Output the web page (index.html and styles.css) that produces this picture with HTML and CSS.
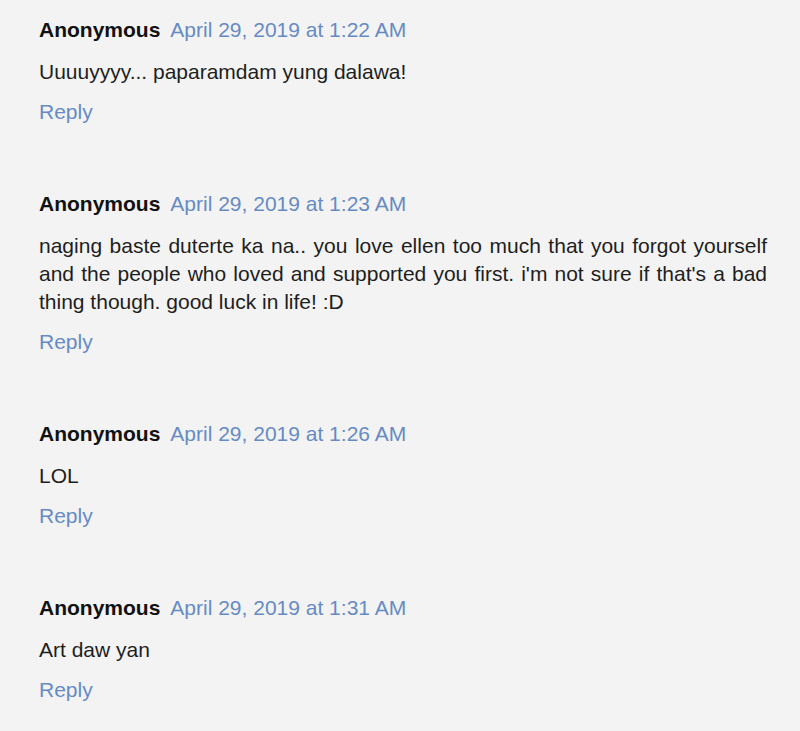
FILE: index.html
```html
<!DOCTYPE html>
<html>
<head>
<meta charset="utf-8">
<link rel="stylesheet" href="styles.css">
</head>
<body>
<div class="comments">
  <div class="comment">
    <div class="head"><span class="name">Anonymous</span><a class="date">April 29, 2019 at 1:22 AM</a></div>
    <p class="text">Uuuuyyyy... paparamdam yung dalawa!</p>
    <a class="reply">Reply</a>
  </div>
  <div class="comment">
    <div class="head"><span class="name">Anonymous</span><a class="date">April 29, 2019 at 1:23 AM</a></div>
    <p class="text">naging baste duterte ka na.. you love ellen too much that you forgot yourself and the people who loved and supported you first. i'm not sure if that's a bad thing though. good luck in life! :D</p>
    <a class="reply">Reply</a>
  </div>
  <div class="comment">
    <div class="head"><span class="name">Anonymous</span><a class="date">April 29, 2019 at 1:26 AM</a></div>
    <p class="text">LOL</p>
    <a class="reply">Reply</a>
  </div>
  <div class="comment">
    <div class="head"><span class="name">Anonymous</span><a class="date">April 29, 2019 at 1:31 AM</a></div>
    <p class="text">Art daw yan</p>
    <a class="reply">Reply</a>
  </div>
</div>
</body>
</html>
```
FILE: styles.css
```css
html, body {
  margin: 0;
  padding: 0;
  background: #f3f3f3;
}
body {
  font-family: "Liberation Sans", Arial, sans-serif;
  font-size: 21px;
  line-height: 28px;
  color: #1e1e1e;
}
.comments {
  width: 728px;
  padding: 16px 0 0 39px;
  display: flex;
  flex-direction: column;
  gap: 64px;
}
.comment {
  display: flex;
  flex-direction: column;
}
.head {
  display: flex;
  align-items: baseline;
}
.name {
  font-weight: bold;
  color: #111;
}
.date {
  margin-left: 10px;
  color: #668bc4;
}
.text {
  margin: 14px 0 0;
  text-align: justify;
}
.reply {
  margin-top: 12px;
  color: #668bc4;
}
```
